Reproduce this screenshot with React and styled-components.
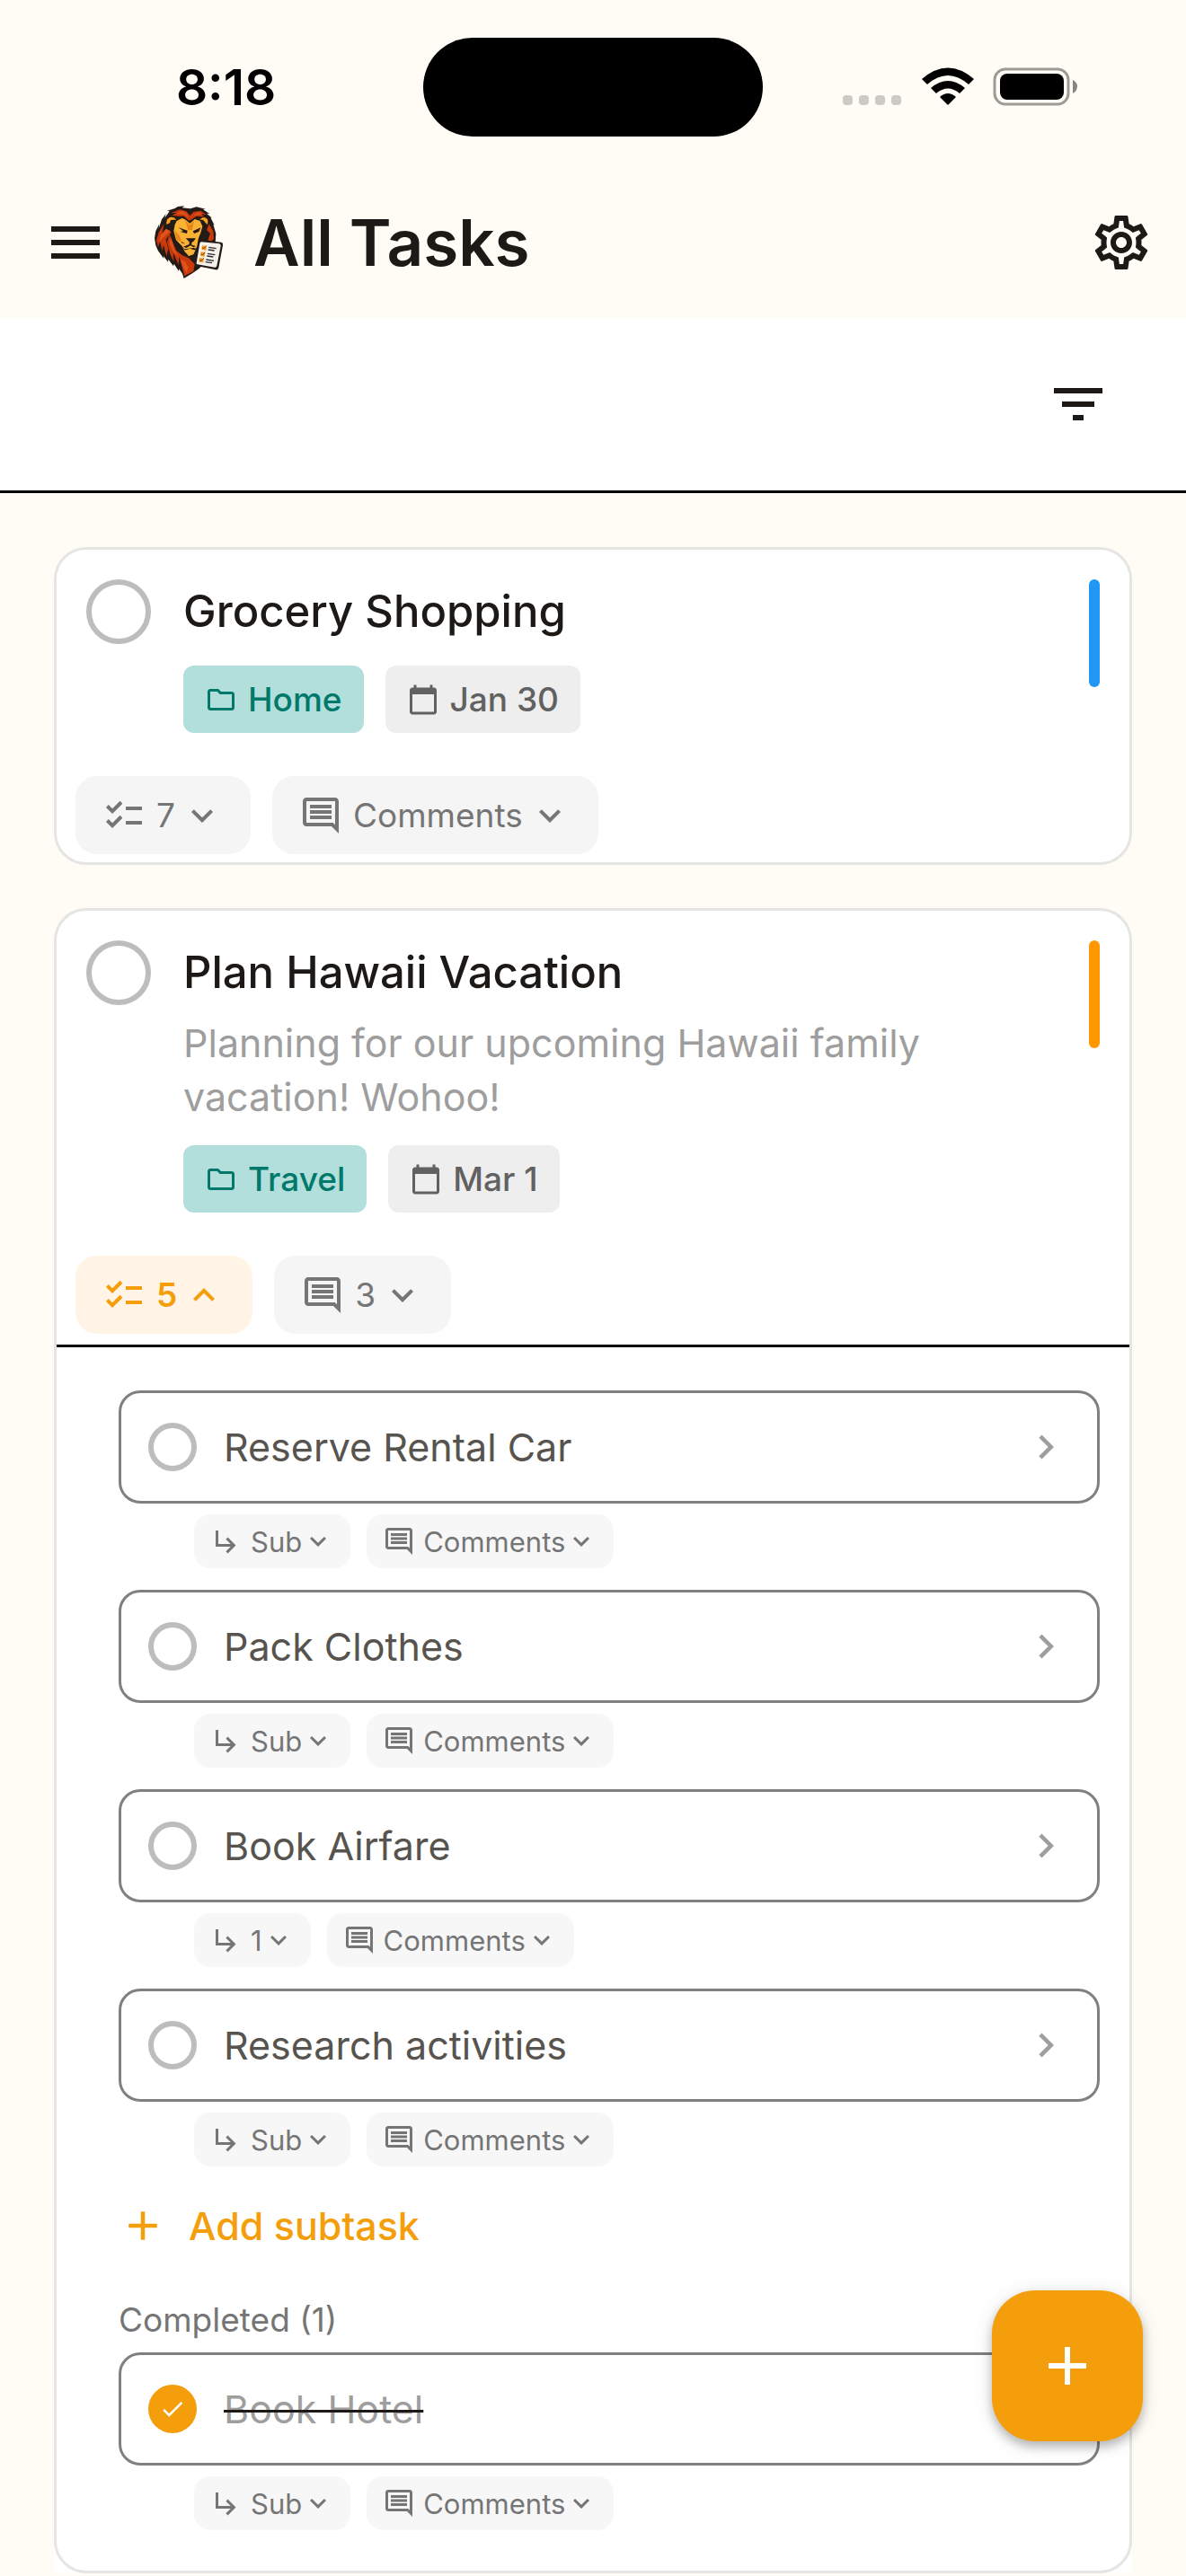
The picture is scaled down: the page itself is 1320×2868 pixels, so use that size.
import React, { useState } from "react";
import styled, { createGlobalStyle } from "styled-components";
import {
    MdMenu,
    MdOutlineSettings,
    MdFilterList,
    MdOutlineFolder,
    MdCalendarToday,
    MdChecklist,
    MdOutlineComment,
    MdExpandMore,
    MdExpandLess,
    MdChevronRight,
    MdSubdirectoryArrowRight,
    MdAdd,
    MdCheck,
} from "react-icons/md";

const tasks = [
    {
        id: "grocery",
        title: "Grocery Shopping",
        project: "Home",
        date: "Jan 30",
        priority: "#2196f3",
        subtaskCount: 7,
        comments: "Comments",
    },
    {
        id: "hawaii",
        title: "Plan Hawaii Vacation",
        description: "Planning for our upcoming Hawaii family vacation! Wohoo!",
        project: "Travel",
        date: "Mar 1",
        priority: "#ff9800",
        subtaskCount: 5,
        comments: "3",
        open: true,
        subtasks: [
            { id: "car", title: "Reserve Rental Car", sub: "Sub" },
            { id: "clothes", title: "Pack Clothes", sub: "Sub" },
            { id: "airfare", title: "Book Airfare", sub: "1" },
            { id: "activities", title: "Research activities", sub: "Sub" },
        ],
        completed: [{ id: "hotel", title: "Book Hotel", sub: "Sub", done: true }],
    },
];

const LionLogo = () => (
    <svg width="84" height="84" viewBox="54 54 252 252" aria-hidden="true">
        {/* mane outline */}
        <path
            fill="#241a16"
            d="M164 300 L159 284 L148 268 L147 276 L131 251 L129 259 L112 236 L111 245 L96 225 L97 234 L78 208 L70 190 L66 166 L70 142 L82 118 L80 134 L90 103 L104 84 L100 98 L116 76 L108 74 L134 66 L144 60 L166 58 L158 64 L186 67 L206 61 L236 68 L228 70 L250 84 L240 83 L258 98 L253 97 L266 122 L262 120 L271 150 L269 182 L256 214 L236 246 L214 268 L190 284 Z"
        />
        {/* mane */}
        <path fill="#c8390c" d="M120 82 L150 70 L172 76 L184 90 L196 78 L220 74 L240 88 L222 84 L232 94 L206 92 L182 108 L164 92 L146 92 L124 90 L140 80 Z" />
        <path fill="#e4521b" d="M138 84 L158 74 L174 84 L181 100 L164 86 Z M192 92 L210 80 L228 84 L208 88 Z" />
        <path fill="#c8390c" d="M98 116 L80 146 L72 172 L78 196 L84 176 L92 208 L96 188 L106 224 L112 200 L104 170 L122 146 L104 138 L90 158 Z" />
        <path fill="#e4521b" d="M104 134 L88 154 L80 180 L94 164 L120 142 Z" />
        <path fill="#c8390c" d="M116 152 L108 178 L118 218 L130 244 L128 214 L146 254 L148 226 L166 292 L196 276 L200 252 L180 232 L158 222 L138 206 L128 182 Z" />
        <path fill="#e4521b" d="M120 162 L116 184 L130 212 L150 232 L134 206 Z M152 236 L166 270 L174 282 L178 262 L168 244 Z" />
        <path fill="#c8390c" d="M248 118 L262 142 L264 168 L254 176 L244 172 L252 150 L240 138 Z" />
        {/* ears */}
        <path fill="#f7a31d" d="M106 120 Q104 98 120 95 Q134 94 138 104 L126 104 Q116 104 118 114 Z M216 104 Q226 92 238 98 Q248 104 242 120 L234 112 Q230 102 216 104 Z" />
        {/* face */}
        <path
            fill="#f9b233"
            d="M140 108 L158 98 L170 104 L184 116 L200 102 L218 108 L226 126 L220 148 L212 168 L208 192 L196 220 L182 224 L168 212 L158 192 L138 172 L130 142 L134 120 Z"
        />
        <path fill="#e8861a" d="M132 138 L150 158 L156 178 L140 172 Z M168 106 L184 122 L198 106 L192 138 L178 138 Z" />
        <path fill="#241a16" d="M146 130 L176 140 L174 150 L152 144 L162 142 Z M194 142 L220 130 L214 144 L198 150 Z" />
        <path fill="#241a16" d="M170 166 L204 166 L196 176 L190 180 L190 188 L204 192 L196 196 L186 190 L172 198 L162 194 L182 186 L182 178 Z" />
        <path fill="#241a16" d="M154 176 L168 184 L158 182 Z M156 192 L166 202 L196 198 L206 200 L200 206 L168 206 Z" />
        <path fill="#f9b233" d="M166 206 L184 200 L202 206 L196 216 L180 226 Z" />
        {/* checklist sheet */}
        <path fill="#241a16" d="M220 172 L288 179 Q296 181 294 190 L280 264 Q278 273 270 271 L206 258 Q200 256 201 249 L213 178 Q214 172 220 172 Z" />
        <path fill="#f4f0ea" d="M222 178 L282 184 Q288 185 287 191 L274 258 Q272 264 267 263 L209 253 Q205 252 206 248 L217 183 Q218 178 222 178 Z" />
        <path fill="#f59a1c" d="M225 190 L240 192 L238 206 L223 204 Z M221 211 L235 213 L233 227 L219 225 Z M216 231 L231 233 L229 247 L214 245 Z" />
        <path fill="none" stroke="#7a3b0a" strokeWidth="3" d="M226 196 L230 201 L239 191 M222 217 L226 222 L235 212 M217 237 L221 242 L230 232" />
        <path fill="none" stroke="#2b2b33" strokeWidth="4" d="M247 196 L272 200 M245 204 L266 207 M243 217 L268 221 M241 225 L262 228 M238 237 L264 241 M236 245 L258 248" />
    </svg>
);

const StatusIcons = () => (
    <svg width="262" height="44" viewBox="0 0 262 44" aria-hidden="true">
        <g fill="#cccac4">
            <rect x="0" y="31" width="11" height="11" rx="4" />
            <rect x="18" y="31" width="11" height="11" rx="4" />
            <rect x="36" y="31" width="11" height="11" rx="4" />
            <rect x="54" y="31" width="11" height="11" rx="4" />
        </g>
        <path d="M88 13 Q117 -12 146 13 L140 19 Q117 -1 94 19 Z" />
        <path d="M98 23 Q117 7 136 23 L130 29 Q117 18 104 29 Z" />
        <path d="M108 33 Q117 25 126 33 L117 42 Z" />
        <rect x="169" y="2" width="82" height="39" rx="12" fill="none" stroke="#9d9b96" strokeWidth="3" />
        <rect x="175" y="7" width="71" height="29" rx="8" />
        <path d="M256 14 Q261 17 261 21 Q261 26 256 29 Z" fill="#86847f" />
    </svg>
);

const SubtaskItem = ({ item }) => {
    const [done, setDone] = useState(!!item.done);

    return (
        <li>
            <SubtaskBox>
                <CheckWrap>
                    <Check
                        type="checkbox"
                        id={item.id}
                        $size={54}
                        checked={done}
                        onChange={() => setDone(!done)}
                    />
                    {done ? <MdCheck size={30} /> : null}
                </CheckWrap>
                <SubtaskTitle htmlFor={item.id} $done={done}>{item.title}</SubtaskTitle>
                <IconBtn aria-label={`Open ${item.title}`}>
                    <MdChevronRight size={54} color="#9e9e9e" />
                </IconBtn>
            </SubtaskBox>
            <SubtaskActions>
                <SmallBtn>
                    <MdSubdirectoryArrowRight size={36} />
                    <SmallText>{item.sub}</SmallText>
                    <MdExpandMore size={36} />
                </SmallBtn>
                <SmallBtn>
                    <MdOutlineComment size={36} />
                    <SmallText>Comments</SmallText>
                    <MdExpandMore size={36} />
                </SmallBtn>
            </SubtaskActions>
        </li>
    );
};

const TaskItem = ({ task }) => {
    const [open, setOpen] = useState(!!task.open);
    const [done, setDone] = useState(false);

    return (
        <Card $open={open}>
            <CardFrame>
                <CardTop>
                    <CheckWrap>
                        <Check
                            type="checkbox"
                            id={task.id}
                            $size={72}
                            checked={done}
                            onChange={() => setDone(!done)}
                        />
                        {done ? <MdCheck size={42} /> : null}
                    </CheckWrap>
                    <CardBody>
                        <TaskTitle>
                            <label htmlFor={task.id}>{task.title}</label>
                        </TaskTitle>
                        {task.description ? <Description>{task.description}</Description> : null}
                        <Tags>
                            <Tag $bg="#b2dfdb" $color="#00796b">
                                <MdOutlineFolder size={36} />
                                {task.project}
                            </Tag>
                            <Tag $bg="#eeeeee" $color="#616161">
                                <MdCalendarToday size={36} />
                                {task.date}
                            </Tag>
                        </Tags>
                    </CardBody>
                    <Priority $color={task.priority} />
                </CardTop>

                <CardActions>
                    <ActionBtn $active={open} aria-expanded={open} onClick={() => setOpen(!open)}>
                        <MdChecklist size={48} />
                        <ActionText>{task.subtaskCount}</ActionText>
                        {open ? <MdExpandLess size={48} /> : <MdExpandMore size={48} />}
                    </ActionBtn>
                    <ActionBtn>
                        <MdOutlineComment size={48} />
                        <ActionText>{task.comments}</ActionText>
                        <MdExpandMore size={48} />
                    </ActionBtn>
                </CardActions>

                {open && task.subtasks ? (
                    <SubtaskPanel>
                        <SubtaskList>
                            {task.subtasks.map((item) => <SubtaskItem key={item.id} item={item} />)}
                        </SubtaskList>
                        <AddBtn>
                            <MdAdd size={54} />
                            Add subtask
                        </AddBtn>
                        <CompletedTitle>Completed ({task.completed.length})</CompletedTitle>
                        <SubtaskList>
                            {task.completed.map((item) => <SubtaskItem key={item.id} item={item} />)}
                        </SubtaskList>
                    </SubtaskPanel>
                ) : null}
            </CardFrame>
        </Card>
    );
};

const App = () => {
    return (
        <Page>
            <GlobalStyle />
            <StatusBar>
                <Time>8:18</Time>
                <Island />
                <StatusRight>
                    <StatusIcons />
                </StatusRight>
            </StatusBar>

            <AppBar>
                <IconBtn aria-label="Menu">
                    <MdMenu size={72} />
                </IconBtn>
                <Brand>
                    <LionLogo />
                    <PageTitle>All Tasks</PageTitle>
                </Brand>
                <IconBtn aria-label="Settings">
                    <MdOutlineSettings size={72} />
                </IconBtn>
            </AppBar>

            <Toolbar>
                <IconBtn aria-label="Filter">
                    <MdFilterList size={72} />
                </IconBtn>
            </Toolbar>

            <TaskList>
                {tasks.map((task) => <TaskItem key={task.id} task={task} />)}
            </TaskList>

            <Fab aria-label="Add task">
                <MdAdd size={72} />
            </Fab>
        </Page>
    );
};

export default App;

const GlobalStyle = createGlobalStyle`
    * {
        box-sizing: border-box;
    }
    body {
        margin: 0;
        background-color: #fffcf5;
        color: #1c1917;
        font-family: Inter, "Liberation Sans", sans-serif;
    }
    button {
        margin: 0;
        padding: 0;
        border: none;
        background: none;
        color: inherit;
        font-family: inherit;
        cursor: pointer;
    }
    svg {
        display: block;
        flex-shrink: 0;
    }
`

const Page = styled.div`
    min-height: 100vh;
`

const StatusBar = styled.div`
    display: grid;
    grid-template-columns: 1fr auto 1fr;
    align-items: center;
    height: 186px;
    padding-top: 42px;
    padding-bottom: 34px;
    color: #000;
`

const Time = styled.div`
    padding-left: 32px;
    text-align: center;
    font-size: 55px;
    font-weight: 600;
    line-height: 60px;
`

const Island = styled.div`
    width: 378px;
    height: 110px;
    border-radius: 55px;
    background-color: #000;
`

const StatusRight = styled.div`
    display: flex;
    justify-content: center;
    padding-right: 32px;
`

const AppBar = styled.header`
    display: flex;
    align-items: center;
    height: 168px;
    padding: 0 36px 0 48px;
`

const IconBtn = styled.button`
    display: flex;
    align-items: center;
    justify-content: center;
    flex-shrink: 0;
`

const Brand = styled.div`
    display: flex;
    flex: 1;
    align-items: center;
    gap: 30px;
    padding-left: 48px;
`

const PageTitle = styled.h1`
    margin: 0;
    font-size: 71px;
    font-weight: 600;
    line-height: 84px;
`

const Toolbar = styled.div`
    display: flex;
    align-items: center;
    justify-content: flex-end;
    padding: 60px 84px;
    border-bottom: 3px solid #000;
    background-color: #fff;
`

const TaskList = styled.main`
    display: flex;
    flex-direction: column;
    gap: 48px;
    padding: 60px 60px 0;
`

const Card = styled.article`
    border-radius: ${(props) => (props.$open ? "36px 36px 0 0" : "36px")};
    background-color: #fff;
`

const CardFrame = styled.div`
    border: 3px solid #e5e5e3;
    border-radius: 36px;
`

const CardTop = styled.div`
    display: flex;
    align-items: flex-start;
    gap: 36px;
    padding: 33px 33px 0;
`

const CardBody = styled.div`
    flex: 1;
    min-width: 0;
`

const CheckWrap = styled.span`
    position: relative;
    display: flex;
    flex-shrink: 0;
    svg {
        position: absolute;
        inset: 0;
        margin: auto;
        color: #fff;
        pointer-events: none;
    }
`

const Check = styled.input`
    appearance: none;
    width: ${(props) => props.$size}px;
    height: ${(props) => props.$size}px;
    margin: 0;
    border: 6px solid #bdbdbd;
    border-radius: 50%;
    cursor: pointer;
    &:checked {
        border-color: #f59e0b;
        background-color: #f59e0b;
    }
`

const TaskTitle = styled.h2`
    margin: 0;
    font-size: 49px;
    font-weight: 500;
    line-height: 72px;
`

const Description = styled.p`
    margin: 12px 0 0;
    padding-right: 144px;
    color: #9e9e9e;
    font-size: 43px;
    line-height: 60px;
`

const Tags = styled.div`
    display: flex;
    gap: 24px;
    margin-top: 24px;
`

const Tag = styled.span`
    display: flex;
    align-items: center;
    gap: 12px;
    height: 75px;
    padding: 0 24px;
    border-radius: 12px;
    background-color: ${(props) => props.$bg};
    color: ${(props) => props.$color};
    font-size: 37px;
    font-weight: 500;
`

const Priority = styled.div`
    width: 12px;
    height: 120px;
    border-radius: 6px;
    background-color: ${(props) => props.$color};
`

const CardActions = styled.div`
    display: flex;
    gap: 24px;
    padding: 48px 21px 9px;
`

const ActionBtn = styled.button`
    display: flex;
    align-items: center;
    height: 87px;
    padding: 0 30px;
    border-radius: 24px;
    background-color: ${(props) => (props.$active ? "#fff4e5" : "#f5f5f5")};
    color: ${(props) => (props.$active ? "#f59e0b" : "#757575")};
    font-size: 37px;
    font-weight: ${(props) => (props.$active ? 600 : 400)};
`

const ActionText = styled.span`
    margin: 0 6px 0 12px;
`

const SubtaskPanel = styled.section`
    margin-top: 3px;
    padding: 48px 33px 21px 69px;
    border-top: 3px solid #000;
`

const SubtaskList = styled.ul`
    margin: 0;
    padding: 0;
    list-style: none;
`

const SubtaskBox = styled.div`
    display: flex;
    align-items: center;
    gap: 30px;
    height: 126px;
    padding: 0 30px;
    border: 3px solid #808080;
    border-radius: 24px;
`

const SubtaskTitle = styled.label`
    flex: 1;
    color: ${(props) => (props.$done ? "#9e9e9e" : "#57534e")};
    font-size: 43px;
    line-height: 60px;
    text-decoration: ${(props) => (props.$done ? "line-through 3px #1c1917" : "none")};
`

const SubtaskActions = styled.div`
    display: flex;
    gap: 18px;
    padding: 12px 0 24px 84px;
`

const SmallBtn = styled.button`
    display: flex;
    align-items: center;
    height: 60px;
    padding: 0 18px;
    border-radius: 18px;
    background-color: #f7f7f7;
    color: #757575;
    font-size: 31px;
`

const SmallText = styled.span`
    margin-left: 9px;
`

const AddBtn = styled.button`
    display: flex;
    align-items: center;
    gap: 24px;
    height: 84px;
    color: #f59e0b;
    font-size: 43px;
    font-weight: 500;
`

const CompletedTitle = styled.h3`
    margin: 39px 0 12px;
    color: #757575;
    font-size: 37px;
    font-weight: 400;
    line-height: 48px;
`

const Fab = styled.button`
    position: fixed;
    right: 48px;
    bottom: 150px;
    display: flex;
    align-items: center;
    justify-content: center;
    width: 168px;
    height: 168px;
    border-radius: 48px;
    background-color: #f59e0b;
    color: #fff;
    box-shadow: 0 6px 12px rgba(0, 0, 0, 0.25), 0 3px 24px rgba(0, 0, 0, 0.1);
`
